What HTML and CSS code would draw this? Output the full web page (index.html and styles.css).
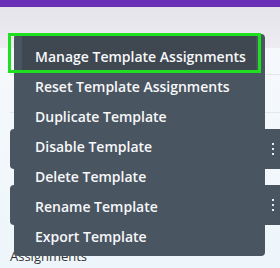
FILE: index.html
```html
<!DOCTYPE html>
<html>
<head>
<meta charset="utf-8">
<link rel="stylesheet" href="styles.css">
</head>
<body>
<div class="page">
  <div class="topbar"></div>
  <div class="header"></div>
  <div class="panel">
    <div class="row"></div>
    <div class="row"></div>
    <div class="card"><span class="dots"><i></i><i></i><i></i></span></div>
    <div class="card"><span class="dots"><i></i><i></i><i></i></span></div>
    <div class="label">Assignments</div>
  </div>

  <ul class="menu">
    <li class="item active">Manage Template Assignments</li>
    <li class="item">Reset Template Assignments</li>
    <li class="item">Duplicate Template</li>
    <li class="item">Disable Template</li>
    <li class="item">Delete Template</li>
    <li class="item">Rename Template</li>
    <li class="item">Export Template</li>
  </ul>
  <div class="highlight"></div>
</div>
</body>
</html>
```

FILE: styles.css
```css
html, body {
  margin: 0;
  padding: 0;
}
body {
  width: 280px;
  height: 268px;
  overflow: hidden;
  font-family: "Open Sans", "Liberation Sans", sans-serif;
  background: #eef6fb;
}
.page {
  position: relative;
  width: 280px;
  height: 268px;
  overflow: hidden;
}
.topbar {
  height: 7px;
  background: #6b2fb7;
}
.header {
  height: 41px;
  background: linear-gradient(180deg, #e4e4ea 0%, #ececf1 100%);
}
.panel {
  background: linear-gradient(180deg, #f6f9fc 0%, #eef6fb 100%);
  padding-left: 10px;
  height: 220px;
  display: flex;
  flex-direction: column;
}
.row {
  flex: none;
  height: 26px;
  border-bottom: 1px solid #e3e8ec;
}
.row + .row {
  height: 37px;
}
.card {
  flex: none;
  height: 40px;
  background: #4a5562;
  border-radius: 4px 0 0 4px;
  margin-top: 16px;
  display: flex;
  justify-content: flex-end;
  align-items: center;
  padding-right: 6px;
}
.dots {
  display: flex;
  flex-direction: column;
  gap: 2.5px;
}
.dots i {
  display: block;
  width: 2.5px;
  height: 2.5px;
  background: #e9edf1;
}
.label {
  flex: none;
  margin-top: 22px;
  font-size: 13px;
  line-height: 18px;
  color: #333;
}
.menu {
  position: absolute;
  left: 14px;
  top: 34px;
  width: 251px;
  margin: 0;
  padding: 8px 0 4px;
  list-style: none;
  background: #4a5562;
  border-radius: 4px;
  box-sizing: border-box;
}
.item {
  height: 30px;
  line-height: 30px;
  padding-left: 21px;
  font-size: 14px;
  font-weight: 600;
  color: #f7f8f9;
  white-space: nowrap;
}
.item.active {
  margin: -6px 9px 0 8px;
  padding-top: 6px;
  padding-left: 13px;
  background: #3f4751;
}
.highlight {
  position: absolute;
  left: 8px;
  top: 33px;
  width: 253px;
  height: 40px;
  box-sizing: border-box;
  border: 3px solid #1fe01f;
}
```
